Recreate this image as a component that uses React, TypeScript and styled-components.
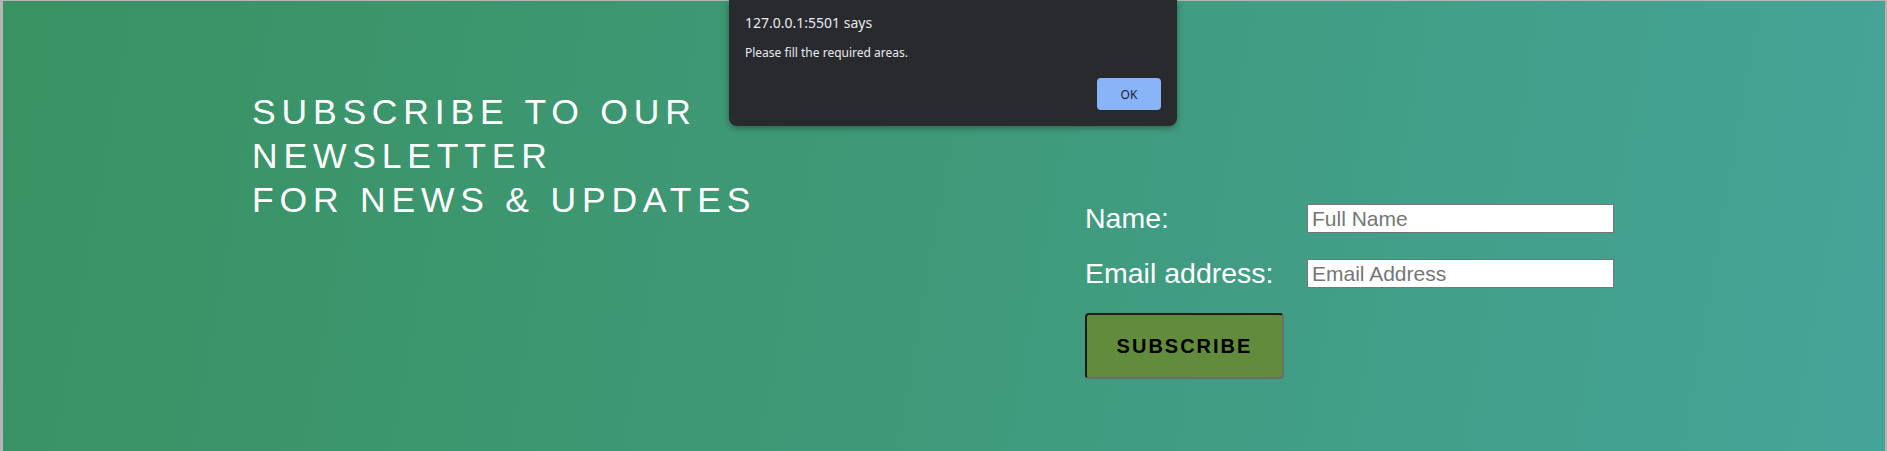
import React, { useState } from "react";
import styled, { createGlobalStyle } from "styled-components";

const GlobalStyle = createGlobalStyle`
  html, body {
    margin: 0;
    padding: 0;
    background: #b5b5b5;
    overflow: hidden;
  }
`;

const Page = styled.div`
  position: relative;
  width: 1887px;
  height: 451px;
  padding: 1px 2px 0 3px;
  box-sizing: border-box;
`;

const Section = styled.section`
  display: flex;
  align-items: flex-start;
  height: 450px;
  box-sizing: border-box;
  padding: 89px 0 0 249px;
  background: linear-gradient(100deg, #399262 0%, #3f9a7a 50%, #45a498 100%);
  font-family: "Liberation Sans", Arial, sans-serif;
  color: #ffffff;
`;

const Heading = styled.h2`
  flex: 0 0 580px;
  margin: 0 253px 0 0;
  font-size: 35.5px;
  line-height: 44px;
  font-weight: 400;
  letter-spacing: 5.8px;
`;

const Form = styled.form`
  display: grid;
  grid-template-columns: 222px 307px;
  row-gap: 26px;
  align-items: center;
  margin-top: 114px;
`;

const Label = styled.label`
  font-size: 28.5px;
  line-height: 29px;
`;

const Input = styled.input`
  height: 29px;
  box-sizing: border-box;
  margin: 0;
  padding: 0 4px;
  border: 1px solid #767676;
  background: #ffffff;
  font-family: "Liberation Sans", Arial, sans-serif;
  font-size: 21px;
  color: #222;
  outline: none;

  &::placeholder {
    color: #767676;
  }
`;

const SubmitButton = styled.button`
  grid-column: 1 / span 2;
  justify-self: start;
  width: 199px;
  height: 66px;
  margin-top: -1px;
  padding: 0;
  background: #628c3c;
  border-style: solid;
  border-width: 2px;
  border-color: #1e1e1e #6c6c6c #6c6c6c #1e1e1e;
  border-radius: 4px;
  font-family: "Liberation Sans", Arial, sans-serif;
  font-size: 20px;
  font-weight: 700;
  letter-spacing: 2px;
  color: #000;
  cursor: pointer;
`;

const Dialog = styled.div`
  position: absolute;
  top: 0;
  left: 729px;
  width: 448px;
  height: 126px;
  box-sizing: border-box;
  padding: 13px 16px 16px;
  background: #292a2d;
  border-radius: 0 0 8px 8px;
  box-shadow: 0 2px 6px rgba(0, 0, 0, 0.35);
  font-family: "Noto Sans", "Open Sans", sans-serif;
  color: #e8eaed;
  display: flex;
  flex-direction: column;
`;

const DialogTitle = styled.div`
  font-size: 14px;
  line-height: 20px;
`;

const DialogMessage = styled.div`
  margin-top: 12px;
  font-size: 12px;
  line-height: 16px;
`;

const DialogActions = styled.div`
  margin-top: auto;
  display: flex;
  justify-content: flex-end;
`;

const OkButton = styled.button`
  width: 64px;
  height: 32px;
  border: none;
  border-radius: 4px;
  background: #8ab4f8;
  color: #202124;
  font-family: "Noto Sans", "Open Sans", sans-serif;
  font-size: 12px;
  cursor: pointer;
`;

const App = () => {
  const [showAlert, setShowAlert] = useState(true);

  return (
    <Page>
      <GlobalStyle />
      <Section>
        <Heading>
          SUBSCRIBE TO OUR NEWSLETTER
          <br />
          FOR NEWS &amp; UPDATES
        </Heading>
        <Form onSubmit={(e) => e.preventDefault()}>
          <Label htmlFor="name">Name:</Label>
          <Input id="name" type="text" placeholder="Full Name" />
          <Label htmlFor="email">Email address:</Label>
          <Input id="email" type="email" placeholder="Email Address" />
          <SubmitButton type="submit" onClick={() => setShowAlert(true)}>
            SUBSCRIBE
          </SubmitButton>
        </Form>
      </Section>
      {showAlert && (
        <Dialog>
          <DialogTitle>127.0.0.1:5501 says</DialogTitle>
          <DialogMessage>Please fill the required areas.</DialogMessage>
          <DialogActions>
            <OkButton onClick={() => setShowAlert(false)}>OK</OkButton>
          </DialogActions>
        </Dialog>
      )}
    </Page>
  );
};

export default App;
